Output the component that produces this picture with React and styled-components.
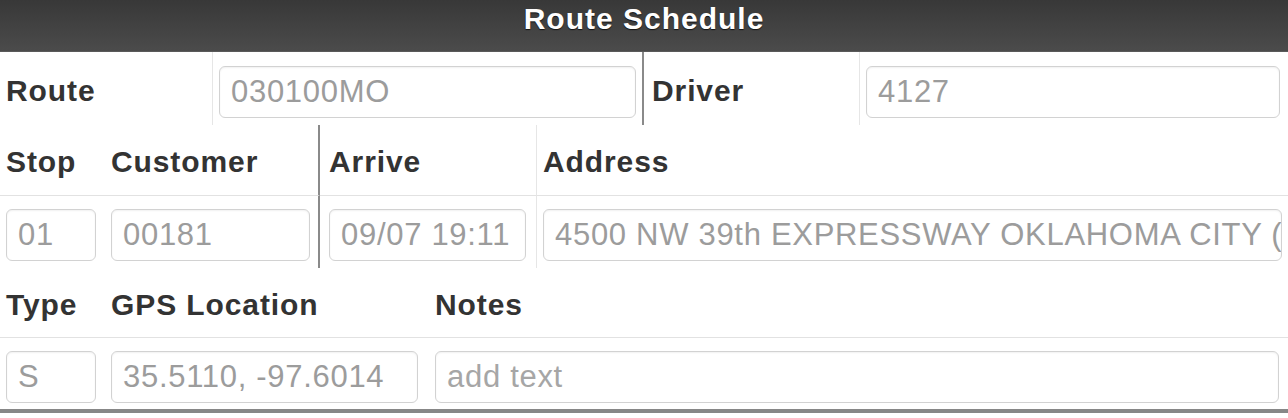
import React from "react";
import styled, { createGlobalStyle } from "styled-components";

const Global = createGlobalStyle`
  html, body { margin: 0; padding: 0; background: #fff; }
  body { font-family: "Liberation Sans", Arial, Helvetica, sans-serif; }
  * { box-sizing: border-box; }
`;

const Page = styled.div`
  width: 1288px;
  background: #fff;
  padding-bottom: 5px;
`;

const Header = styled.header`
  height: 52px;
  background: linear-gradient(#383838, #4b4b4b);
  border-bottom: 1px solid #5a5a5a;
  text-align: center;
`;

const Title = styled.h1`
  margin: 0;
  font-size: 30px;
  line-height: 38px;
  font-weight: bold;
  letter-spacing: 1px;
  color: #fff;
  text-shadow: 0 1px 1px #111;
`;

const Grid = styled.div`
  display: grid;
  grid-template-columns: ${(p) => p.$cols};
`;

const Cell = styled.div`
  display: flex;
  align-items: center;
  height: ${(p) => p.$h}px;
  padding-top: ${(p) => (p.$field ? 6 : 4)}px;
  padding-left: ${(p) => p.$pl ?? 6}px;
  padding-right: ${(p) => p.$pr ?? 6}px;
  border-right: ${(p) =>
    p.$line === "dark" ? "2px solid #8a8a8a" : p.$line === "light" ? "1px solid #e6e6e6" : "none"};
  border-bottom: ${(p) => (p.$rule ? "1px solid #e2e2e2" : "none")};
`;

const Label = styled.span`
  font-size: 30px;
  font-weight: bold;
  letter-spacing: 0.9px;
  color: #333;
  white-space: nowrap;
`;

const Field = styled.input`
  width: 100%;
  height: 52px;
  padding: 0 0 0 11px;
  margin: 0;
  border: 1px solid #d2d2d2;
  border-radius: 6px;
  background: #fff;
  box-shadow: inset 0 1px 2px rgba(0, 0, 0, 0.06);
  font-family: "Liberation Sans", Arial, Helvetica, sans-serif;
  font-size: 31px;
  letter-spacing: 0.7px;
  color: #9c9c9c;
  outline: none;
  &::placeholder { color: #a6a6a6; }
`;

const BottomRule = styled.div`
  height: 4px;
  background: #878787;
`;

export default function App() {
  return (
    <Page>
      <Global />
      <Header>
        <Title>Route Schedule</Title>
      </Header>

      <Grid $cols="213px 431px 216px 1fr">
        <Cell $h={73} $line="light"><Label>Route</Label></Cell>
        <Cell $h={73} $field $line="dark" $pl={6} $pr={6}>
          <Field readOnly value="030100MO" />
        </Cell>
        <Cell $h={73} $line="light" $pl={8}><Label>Driver</Label></Cell>
        <Cell $h={73} $field $pl={6} $pr={8}>
          <Field readOnly value="4127" />
        </Cell>
      </Grid>

      <Grid $cols="104px 216px 217px 1fr">
        <Cell $h={71} $rule><Label>Stop</Label></Cell>
        <Cell $h={71} $rule $line="dark" $pl={7}><Label>Customer</Label></Cell>
        <Cell $h={71} $rule $line="light" $pl={9}><Label>Arrive</Label></Cell>
        <Cell $h={71} $rule $pl={6}><Label>Address</Label></Cell>

        <Cell $h={72} $field $pr={8}><Field readOnly value="01" /></Cell>
        <Cell $h={72} $field $line="dark" $pl={7} $pr={8}><Field readOnly value="00181" /></Cell>
        <Cell $h={72} $field $line="light" $pl={9} $pr={10}><Field readOnly value="09/07 19:11" /></Cell>
        <Cell $h={72} $field $pl={6} $pr={6}>
          <Field readOnly value="4500 NW 39th EXPRESSWAY OKLAHOMA CITY (OK)" />
        </Cell>
      </Grid>

      <Grid $cols="104px 324px 1fr">
        <Cell $h={70} $rule><Label>Type</Label></Cell>
        <Cell $h={70} $rule $pl={7}><Label>GPS Location</Label></Cell>
        <Cell $h={70} $rule $pl={7}><Label>Notes</Label></Cell>

        <Cell $h={71} $field $pr={8}><Field readOnly value="S" /></Cell>
        <Cell $h={71} $field $pl={7} $pr={10}><Field readOnly value="35.5110, -97.6014" /></Cell>
        <Cell $h={71} $field $pl={7} $pr={9}><Field placeholder="add text" /></Cell>
      </Grid>
      <BottomRule />
    </Page>
  );
}
